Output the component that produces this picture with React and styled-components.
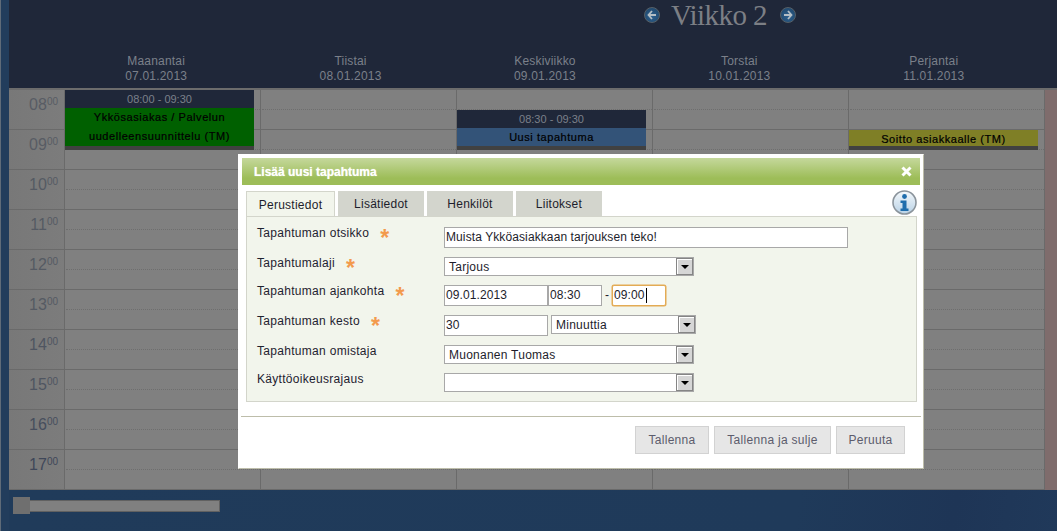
import styled, { createGlobalStyle } from 'styled-components';

const GlobalStyle = createGlobalStyle`
  html, body { margin: 0; padding: 0; background: #203a59; }
  body { font-family: "Liberation Sans", Arial, sans-serif; font-size: 12px; }
`;

const Page = styled.div`
  position: relative;
  width: 1057px;
  height: 531px;
  overflow: hidden;
  display: flex;
  background: #203a59;
  border-left: 1px solid #5f6b78;
  box-sizing: border-box;
`;

const Strip = styled.div`
  width: 8px;
  flex: none;
  background: #223d5c;
`;

const Main = styled.div`
  flex: 1;
  display: flex;
  flex-direction: column;
  min-width: 0;
`;

const Header = styled.header`
  height: 90px;
  box-sizing: border-box;
  background: #1f2739;
  border-bottom: 2px solid #6c6c6c;
  display: flex;
  flex-direction: column;
`;

const WeekNav = styled.div`
  height: 53px;
  display: flex;
  justify-content: flex-start;
  align-items: flex-start;
  padding: 1px 0 0 635px;
  gap: 10px;
`;

const WeekTitle = styled.h1`
  margin: 0;
  box-sizing: border-box;
  padding-right: 2px;
  font-family: "Liberation Serif", "DejaVu Serif", serif;
  font-size: 29px;
  line-height: 28px;
  font-weight: normal;
  letter-spacing: -0.55px;
  color: #7c7f85;
  width: 100px;
  text-align: center;
`;

const RoundArrow = styled.button`
  width: 16px;
  height: 16px;
  margin-top: 6px;
  padding: 0;
  border: 1px solid #566068;
  border-radius: 50%;
  background: radial-gradient(circle at 50% 60%, #2b5f8e, #1f4467);
  display: flex;
  align-items: center;
  justify-content: center;
`;

const DayHeads = styled.div`
  display: flex;
  padding-left: 50px;
`;

const DayHead = styled.div`
  width: 194.4px;
  text-align: center;
  font-size: 12px;
  line-height: 15px;
  letter-spacing: 0.2px;
  color: #7b808a;
`;

const Grid = styled.div`
  position: relative;
  display: flex;
  height: 400px;
  background: #808080;
`;

const TimeColumn = styled.div`
  width: 56px;
  flex: none;
  box-sizing: border-box;
  background: linear-gradient(90deg, #787878, #7c7c7c);
  border-right: 1px solid #6a6a6a;
`;

const HourLabel = styled.div`
  height: 40px;
  box-sizing: border-box;
  border-bottom: 1px solid #6a6a6a;
  padding: 5px 6px 0 0;
  text-align: right;
  font-size: 16px;
  line-height: 19px;
  color: ${(p) => p.$tone};

  sup {
    font-size: 10px;
    line-height: 0;
    vertical-align: 5px;
  }
`;

const DayColumn = styled.div`
  position: relative;
  width: 196px;
  flex: none;
  box-sizing: border-box;
  border-right: 1px solid #6a6a6a;
`;

const Slot = styled.div`
  height: 40px;
  box-sizing: border-box;
  border-bottom: 1px solid #6a6a6a;
  position: relative;

  &::after {
    content: '';
    position: absolute;
    left: 1px;
    right: 0;
    top: 19px;
    border-top: 1px dotted #6e6e6e;
  }
`;

const WeekendSide = styled.div`
  flex: 1;
  background: #7f6c6c;
`;

const Event = styled.div`
  position: absolute;
  left: 0;
  width: 189px;
  top: ${(p) => p.$top}px;
  display: flex;
  flex-direction: column;
  border-bottom: 4px solid #414141;
  z-index: 1;
`;

const EventTime = styled.div`
  height: 18px;
  background: #1f2739;
  color: #7b808a;
  font-size: 11px;
  line-height: 18px;
  text-align: center;
`;

const EventBody = styled.div`
  height: ${(p) => p.$height}px;
  background: ${(p) => p.$color};
  color: #000;
  font-size: 11px;
  line-height: 19px;
  text-align: center;
  letter-spacing: 0.55px;
  -webkit-text-stroke: 0.2px #000;
`;

const Footer = styled.footer`
  flex: 1;
  display: flex;
  align-items: center;
  padding: 0 0 9px 4px;
  background: linear-gradient(100deg, #203b5a, #1f3a5a 75%, #1e3556 90%, #20395a);
`;

const Slider = styled.div`
  position: relative;
  width: 207px;
  height: 12px;
  box-sizing: border-box;
  background: #808080;
  border: 1px solid #616161;
`;

const SliderThumb = styled.div`
  position: absolute;
  left: -1px;
  top: -4px;
  width: 17px;
  height: 17px;
  background: #6f6f6f;
`;

const Modal = styled.section`
  position: absolute;
  left: 237px;
  top: 154px;
  width: 686px;
  height: 315px;
  box-sizing: border-box;
  background: #fff;
  border: 1px solid #bdbdaa;
  border-top-color: #fff;
  border-left-color: #fff;
  padding: 3px 3px 0;
  z-index: 2;
  color: #1d1d2b;
`;

const TitleBar = styled.div`
  height: 27px;
  display: flex;
  align-items: center;
  justify-content: space-between;
  padding: 0 8px 0 12px;
  background: linear-gradient(#c5d89c, #9dbd58 75%, #9dbd58);
  color: #fff;
`;

const TitleText = styled.h2`
  margin: 0;
  font-size: 12px;
  font-weight: bold;
  text-shadow: 0 0 1px #e9efd3;
`;

const TabRow = styled.div`
  position: relative;
  display: flex;
  gap: 3px;
  margin: 6px 0 0 4px;
  height: 25px;
`;

const Tab = styled.div`
  width: ${(p) => p.$width}px;
  box-sizing: border-box;
  height: 25px;
  text-align: center;
  font-size: 12px;
  line-height: 26px;
  letter-spacing: 0.25px;
  background: ${(p) => (p.$active ? '#f2f5ec' : '#d3d5cd')};
  border: ${(p) => (p.$active ? '1px solid #d3d5cb' : 'none')};
  border-bottom: none;
`;

const InfoButton = styled.div`
  position: absolute;
  right: 3px;
  top: -1px;
  width: 25px;
  height: 25px;
`;

const Panel = styled.div`
  width: 671px;
  height: 186px;
  margin-left: 4px;
  box-sizing: border-box;
  background: #f2f5ec;
  border: 1px solid #d3d5cb;
  padding: 10px 0 0 10px;
  display: flex;
  flex-direction: column;
`;

const FormRow = styled.div`
  display: flex;
  height: ${(p) => p.$height}px;
`;

const Label = styled.label`
  width: 187px;
  flex: none;
  line-height: 12px;
  font-size: 12px;
  letter-spacing: 0.3px;
  color: #1f2230;
  display: flex;
  gap: 11px;
`;

const Required = styled.span`
  color: #f39a4d;
  font-size: 23px;
  line-height: 22px;
  font-weight: bold;
  height: 12px;
`;

const TextField = styled.div`
  width: ${(p) => p.$width}px;
  height: 21px;
  box-sizing: border-box;
  padding-left: 1px;
  background: #fff;
  border: 1px solid ${(p) => (p.$focused ? '#e3ab55' : '#a8a8a8')};
  border-radius: ${(p) => (p.$focused ? '2px' : '0')};
  box-shadow: ${(p) => (p.$focused ? '0 0 0 0.5px #e3ab55' : 'none')};
  font-size: 12px;
  line-height: 19px;
  letter-spacing: 0.1px;
  display: flex;
  align-items: center;
`;

const Caret = styled.span`
  width: 1px;
  height: 15px;
  margin-left: 1px;
  background: #000;
`;

const Dash = styled.span`
  width: 10px;
  text-align: center;
  line-height: 21px;
`;

const SelectBox = styled.div`
  width: ${(p) => p.$width}px;
  height: 19px;
  box-sizing: border-box;
  margin-left: ${(p) => p.$gap || 0}px;
  padding-left: 4px;
  background: #fff;
  border: 1px solid #a8a8a8;
  display: flex;
  align-items: center;
  justify-content: space-between;
  font-size: 12px;
  letter-spacing: 0.25px;
`;

const SelectArrow = styled.span`
  width: 17px;
  height: 17px;
  box-sizing: border-box;
  border: 1px solid #858585;
  box-shadow: inset 1px 1px 0 #fff;
  background: #d6d6d6;
  display: flex;
  align-items: center;
  justify-content: center;

  &::after {
    content: '';
    border-left: 4px solid transparent;
    border-right: 4px solid transparent;
    border-top: 4px solid #000;
  }
`;

const Divider = styled.hr`
  margin: 14px 0 0 -1px;
  width: 680px;
  height: 1px;
  border: 0;
  background: #bdbdaa;
`;

const Actions = styled.div`
  display: flex;
  justify-content: flex-end;
  gap: 5px;
  padding: 9px 15px 0 0;
`;

const ActionButton = styled.button`
  height: 28px;
  width: ${(p) => p.$width}px;
  padding: 0;
  background: #e6e6e6;
  border: 1px solid #d2d2d2;
  color: #5c5c6c;
  font-family: "Liberation Sans", Arial, sans-serif;
  font-size: 12px;
  letter-spacing: 0.3px;
`;

const hours = ['08', '09', '10', '11', '12', '13', '14', '15', '16', '17'];
const hourTones = ['#585c64', '#585c64', '#555a63', '#555a63', '#555a63', '#555a63', '#4f5561', '#4f5561', '#474e5d', '#3f4759'];

const days = [
  { name: 'Maanantai', date: '07.01.2013' },
  { name: 'Tiistai', date: '08.01.2013' },
  { name: 'Keskiviikko', date: '09.01.2013' },
  { name: 'Torstai', date: '10.01.2013' },
  { name: 'Perjantai', date: '11.01.2013' },
];

const Arrow = ({ dir }) => (
  <svg width="10" height="10" viewBox="0 0 10 10" aria-hidden="true">
    <path
      d={dir === 'left' ? 'M5 1 1.5 5 5 9M1.5 5H9' : 'M5 1 8.5 5 5 9M8.5 5H1'}
      fill="none"
      stroke="#b4bec5"
      strokeWidth="1.8"
    />
  </svg>
);

const CloseIcon = () => (
  <svg width="11" height="11" viewBox="0 0 11 11" aria-label="Sulje">
    <path d="M1.5 1.5 9.5 9.5M9.5 1.5 1.5 9.5" stroke="#fff" strokeWidth="3" />
  </svg>
);

const InfoIcon = () => (
  <svg width="25" height="25" viewBox="0 0 25 25" aria-label="Ohje">
    <defs>
      <linearGradient id="infoFill" x1="0" y1="0" x2="0" y2="1">
        <stop offset="0" stopColor="#f4f8fb" />
        <stop offset="1" stopColor="#b9d2e6" />
      </linearGradient>
    </defs>
    <circle cx="12.5" cy="12.5" r="11.5" fill="url(#infoFill)" stroke="#8b949c" strokeWidth="1.6" />
    <circle cx="12.5" cy="6.5" r="2.4" fill="#1f6dac" />
    <path d="M8.5 10.5h6v8h2v2.5h-8v-2.5h2v-5.5h-2z" fill="#1f6dac" />
  </svg>
);

const Slots = () => hours.map((h) => <Slot key={h} />);

const App = () => (
  <Page>
    <GlobalStyle />
    <Strip />
    <Main>
      <Header>
        <WeekNav>
          <RoundArrow aria-label="Edellinen viikko"><Arrow dir="left" /></RoundArrow>
          <WeekTitle>Viikko 2</WeekTitle>
          <RoundArrow aria-label="Seuraava viikko"><Arrow dir="right" /></RoundArrow>
        </WeekNav>
        <DayHeads>
          {days.map((d) => (
            <DayHead key={d.date}>{d.name}<br />{d.date}</DayHead>
          ))}
        </DayHeads>
      </Header>
      <Grid>
        <TimeColumn>
          {hours.map((h, i) => (
            <HourLabel key={h} $tone={hourTones[i]}>{h}<sup>00</sup></HourLabel>
          ))}
        </TimeColumn>
        <DayColumn>
          <Slots />
          <Event $top={0}>
            <EventTime>08:00 - 09:30</EventTime>
            <EventBody $height={38} $color="#006000">Ykkösasiakas / Palvelun<br />uudelleensuunnittelu (TM)</EventBody>
          </Event>
        </DayColumn>
        <DayColumn><Slots /></DayColumn>
        <DayColumn>
          <Slots />
          <Event $top={20}>
            <EventTime>08:30 - 09:30</EventTime>
            <EventBody $height={18} $color="#335378">Uusi tapahtuma</EventBody>
          </Event>
        </DayColumn>
        <DayColumn><Slots /></DayColumn>
        <DayColumn>
          <Slots />
          <Event $top={40}>
            <EventBody $height={16} $color="#7f7f26">Soitto asiakkaalle (TM)</EventBody>
          </Event>
        </DayColumn>
        <WeekendSide />
      </Grid>
      <Footer>
        <Slider><SliderThumb /></Slider>
      </Footer>
    </Main>

    <Modal>
      <TitleBar>
        <TitleText>Lisää uusi tapahtuma</TitleText>
        <CloseIcon />
      </TitleBar>
      <TabRow>
        <Tab $width={89} $active>Perustiedot</Tab>
        <Tab $width={86}>Lisätiedot</Tab>
        <Tab $width={86}>Henkilöt</Tab>
        <Tab $width={86}>Liitokset</Tab>
        <InfoButton><InfoIcon /></InfoButton>
      </TabRow>
      <Panel>
        <FormRow $height={30}>
          <Label>Tapahtuman otsikko <Required>*</Required></Label>
          <TextField $width={404}>Muista Ykköasiakkaan tarjouksen teko!</TextField>
        </FormRow>
        <FormRow $height={28}>
          <Label>Tapahtumalaji <Required>*</Required></Label>
          <SelectBox $width={250}>Tarjous<SelectArrow /></SelectBox>
        </FormRow>
        <FormRow $height={30}>
          <Label>Tapahtuman ajankohta <Required>*</Required></Label>
          <TextField $width={104}>09.01.2013</TextField>
          <TextField $width={54}>08:30</TextField>
          <Dash>-</Dash>
          <TextField $width={54} $focused>09:00<Caret /></TextField>
        </FormRow>
        <FormRow $height={30}>
          <Label>Tapahtuman kesto <Required>*</Required></Label>
          <TextField $width={104}>30</TextField>
          <SelectBox $width={145} $gap={3}>Minuuttia<SelectArrow /></SelectBox>
        </FormRow>
        <FormRow $height={28}>
          <Label>Tapahtuman omistaja</Label>
          <SelectBox $width={250}>Muonanen Tuomas<SelectArrow /></SelectBox>
        </FormRow>
        <FormRow $height={19}>
          <Label>Käyttöoikeusrajaus</Label>
          <SelectBox $width={250}><span /><SelectArrow /></SelectBox>
        </FormRow>
      </Panel>
      <Divider />
      <Actions>
        <ActionButton $width={74}>Tallenna</ActionButton>
        <ActionButton $width={117}>Tallenna ja sulje</ActionButton>
        <ActionButton $width={69}>Peruuta</ActionButton>
      </Actions>
    </Modal>
  </Page>
);

export default App;
